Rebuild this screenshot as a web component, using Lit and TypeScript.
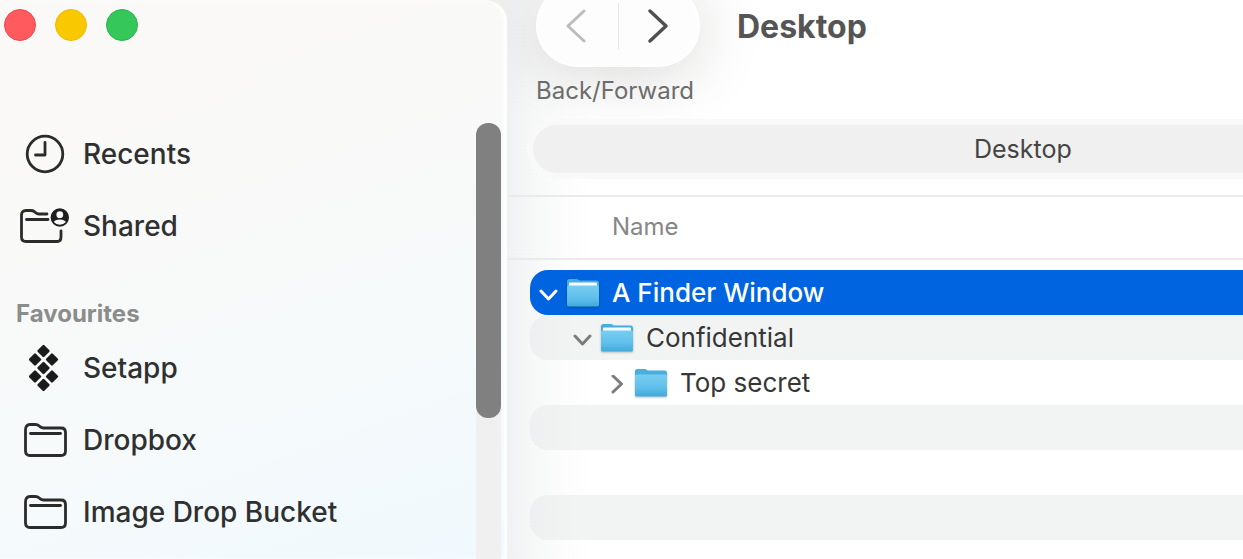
import { LitElement, html, svg, css } from "lit";
import { customElement, state } from "lit/decorators.js";

const folderOutline = svg`
  <path d="M1.5 7 Q1.5 1.5 6 1.5 H11.5 Q13.5 1.5 15 2.8 L16.3 3.9 Q17.6 5 19.5 5 H37 Q41.5 5 41.5 9.500 V28 Q41.500 32.500 37 32.500 H6 Q1.500 32.500 1.500 28 Z"/>
  <path d="M6.500 10.500 H36.500"/>`;

const icons: Record<string, unknown> = {
  clock: html`<svg width="40" height="40" viewBox="0 0 40 40" aria-hidden="true" fill="none" stroke="#2b2b2b" stroke-width="2.800" stroke-linecap="round" stroke-linejoin="round">
    <circle cx="20" cy="20" r="17.800"/><path d="M20 8.500 V21 H10.500"/></svg>`,
  shared: html`<svg width="50" height="36" viewBox="0 0 50 36" aria-hidden="true" fill="none" stroke="#2b2b2b" stroke-width="2.800" stroke-linecap="round" stroke-linejoin="round">
    <path d="M27 6 H19 Q17 6 15.700 4.800 L14.300 3.600 Q13 2.500 11 2.500 H6 Q1.500 2.500 1.500 7 V29 Q1.500 33.500 6 33.500 H37 Q41 33.500 41 29 V23"/>
    <path d="M6.500 11.500 H28"/>
    <circle cx="39.800" cy="9.500" r="9.200" fill="#1f1f1f" stroke="none"/>
    <circle cx="39.800" cy="6.700" r="3.400" fill="#f9f9f8" stroke="none"/>
    <path d="M33.800 14 Q35 11.500 39.800 11.500 Q44.600 11.500 45.800 14 Q43.500 16.700 39.800 16.700 Q36.100 16.700 33.800 14 Z" fill="#f9f9f8" stroke="none"/></svg>`,
  setapp: html`<svg width="32" height="48" viewBox="0 0 32 48" aria-hidden="true" fill="#1b1b1b" stroke="#1b1b1b" stroke-width="2.400" stroke-linejoin="round">
    ${[[14.5, 7], [6, 15.5], [23, 15.5], [14.5, 24], [6, 32.5], [23, 32.5], [14.5, 41]].map(
      ([x, y]) => svg`<path d=${`M${x} ${y - 5} l5 5 l-5 5 l-5 -5 Z`}/>`)}</svg>`,
  folder: html`<svg width="43" height="34" viewBox="0 0 43 34" aria-hidden="true" fill="none" stroke="#2b2b2b" stroke-width="2.800" stroke-linecap="round" stroke-linejoin="round">${folderOutline}</svg>`,
};

const blueFolder = (open: boolean) => html`<svg class="folder" width="34" height="30" viewBox="0 0 34 30" aria-hidden="true">
  <defs><linearGradient id="front" x1="0" y1="0" x2="0" y2="1"><stop offset="0" stop-color="#78cdf1"/><stop offset=".6" stop-color="#5fbfeb"/><stop offset="1" stop-color="#41a9da"/></linearGradient></defs>
  <path d="M1 3.500 Q1 1 3.500 1 H10.500 Q12 1 13 2 L13.800 2.600 H30.500 Q33 2.600 33 5 V14 H1 Z" fill="#49aedd"/>
  ${open ? svg`<rect x="3" y="4.500" width="28" height="5" rx="1" fill="#f6fbfe"/>` : null}
  <path d=${open ? "M1 9 Q1 7.500 2.500 7.500 H31.500 Q33 7.500 33 9 V27 Q33 28.500 31.500 28.500 H2.500 Q1 28.500 1 27 Z" : "M1 8 Q1 6.500 2.500 6.500 H31.500 Q33 6.500 33 8 V27 Q33 28.500 31.500 28.500 H2.500 Q1 28.500 1 27 Z"} fill="url(#front)"/>
</svg>`;

@customElement("finder-sidebar")
class FinderSidebar extends LitElement {
  static styles = css`
    :host { display: grid; grid-template-columns: 1fr 25px 6px; box-sizing: border-box; overflow: hidden;
      background: linear-gradient(160deg, #faf9f8 0%, #f9f9f8 35%, #f6fafb 66%, #f0f9fe 100%);
      border-top-right-radius: 22px; box-shadow: inset -3px 0 3px #fff; }
    .body { min-width: 0; }
    .lights { display: flex; gap: 19px; padding: 9px 0 0 4px; height: 109px; }
    .light { width: 32px; height: 32px; padding: 0; border-radius: 50%; border: 1px solid; }
    .close { background: #ff5a5e; border-color: #f0484c; }
    .minimise { background: #fac800; border-color: #eebc00; }
    .zoom { background: #35c759; border-color: #28b84b; }
    ul { list-style: none; margin: 0; padding: 0; }
    a { display: flex; align-items: center; height: 72px; color: #2f3030; text-decoration: none; font-size: 28px; font-weight: 500; white-space: nowrap; }
    .icon { display: flex; justify-content: center; flex: none; width: 50px; margin: 0 13px 0 20px; }
    .start { justify-content: flex-start; }
    h2 { margin: 0; padding: 35px 0 1px 16px; font-size: 24px; line-height: 34px; font-weight: 700; color: #8b8c8c; }
    .track { margin-top: 123px; background: #f0f0f0; border-radius: 12px 12px 0 0; }
    .thumb { height: 295px; border-radius: 12px; background: #808080; }
  `;
  private group(items: string[][]) {
    return html`<ul>${items.map(([icon, label]) => html`<li><a href="#"><span class="icon ${icon === "shared" ? "start" : ""}">${icons[icon]}</span>${label}</a></li>`)}</ul>`;
  }
  render() {
    return html`
      <div class="body">
        <div class="lights">
          <button class="light close" aria-label="Close"></button>
          <button class="light minimise" aria-label="Minimise"></button>
          <button class="light zoom" aria-label="Zoom"></button>
        </div>
        <nav>
          ${this.group([["clock", "Recents"], ["shared", "Shared"]])}
          <h2>Favourites</h2>
          ${this.group([["setapp", "Setapp"], ["folder", "Dropbox"], ["folder", "Image Drop Bucket"]])}
        </nav>
      </div>
      <div class="track"><div class="thumb"></div></div>`;
  }
}

@customElement("finder-toolbar")
class FinderToolbar extends LitElement {
  static styles = css`
    :host { display: block; padding-left: 29px; }
    .bar { display: flex; align-items: center; gap: 37px; height: 83px; margin-top: -16px; }
    .pill { display: flex; align-items: center; justify-content: center; width: 164px; height: 83px; border-radius: 42px;
      background: #fdfdfd; box-shadow: 0 8px 64px rgba(30, 24, 16, .17), inset 0 0 3px 2px #fff; }
    .pill button { flex: 1; height: 100%; display: flex; align-items: center; justify-content: center; padding: 0; border: 0; background: none; }
    .back { color: #bcbcbc; }
    .forward { color: #505050; }
    .rule { width: 1px; height: 46px; background: #e6e6e6; }
    h1 { margin: 0; padding-top: 2px; font-size: 32px; line-height: 40px; font-weight: 700; color: #555; }
    .label { position: relative; margin: 0; padding: 8px 0 12px; font-size: 24px; line-height: 32px; color: #6c6c6c; }
    .path { position: relative; display: flex; align-items: center; height: 48px; margin-left: -9px; padding-left: 441px; border: 6px solid #f9f9f9; border-right: 0;
      border-radius: 30px 0 0 30px; background: #f0f0f0; font-size: 25px; line-height: 30px; color: #444; }
  `;
  render() {
    return html`
      <div class="bar">
        <div class="pill">
          <button class="back" aria-label="Back"><svg width="22" height="34" viewBox="0 0 22 34" fill="none" stroke="currentColor" stroke-width="3" stroke-linecap="round" stroke-linejoin="round"><path d="M18 2 L2 17 L18 32"/></svg></button>
          <span class="rule"></span>
          <button class="forward" aria-label="Forward"><svg width="22" height="34" viewBox="0 0 22 34" fill="none" stroke="currentColor" stroke-width="3.400" stroke-linecap="round" stroke-linejoin="round"><path d="M2 2 L18 17 L2 32"/></svg></button>
        </div>
        <h1>Desktop</h1>
      </div>
      <p class="label">Back/Forward</p>
      <div class="path">Desktop</div>`;
  }
}

interface Row { name: string; depth: number; open: boolean; selected?: boolean }

@customElement("finder-list")
class FinderList extends LitElement {
  @state() private rows: (Row | null)[] = [
    { name: "A Finder Window", depth: 0, open: true, selected: true },
    { name: "Confidential", depth: 1, open: true },
    { name: "Top secret", depth: 2, open: false },
    null, null, null,
  ];
  static styles = css`
    :host { display: block; margin-top: 16px; }
    table { width: 100%; border-collapse: separate; border-spacing: 0; }
    th { box-sizing: border-box; height: 65px; padding: 0 0 2px 105px; border: solid #e8eaeb; border-width: 2px 0; text-align: left; font-size: 24px; font-weight: 400; color: #868686; }
    tbody::before { content: ""; display: block; height: 10px; }
    td { padding: 0 0 0 23px; }
    .row { display: flex; align-items: center; box-sizing: border-box; height: 45px; padding-left: 8px; border-radius: 18px 0 0 18px; color: #363636; font-size: 26px; white-space: nowrap; }
    .d1 { padding-left: 42px; }
    .d2 { padding-left: 76px; }
    tr:nth-child(even) .row { background: rgba(231, 234, 233, .52); }
    .row.selected { background: #0064e1; color: #fff; font-weight: 500; }
    .twist { display: flex; justify-content: center; width: 22px; padding: 5px 0 0; border: 0; background: none; color: #7c7c7c; }
    .selected .twist { color: #fff; }
    .folder { margin: 1px 12px 0 6px; filter: drop-shadow(0 1px 1px rgba(0, 0, 0, .25)); }
  `;
  render() {
    return html`<table>
      <thead><tr><th scope="col">Name</th></tr></thead>
      <tbody>${this.rows.map((r) => html`<tr><td>${r
        ? html`<div class="row d${r.depth} ${r.selected ? "selected" : ""}">
            <button class="twist" aria-label="Toggle ${r.name}" aria-expanded=${r.open}><svg width="20" height="20" viewBox="0 0 20 20" fill="none" stroke="currentColor" stroke-width="3" stroke-linecap="round" stroke-linejoin="round"><path d=${r.open ? "M2 6 L9.500 14 L17 6" : "M6 1 L14.500 9 L6 17"}/></svg></button>
            ${blueFolder(r.open)}<span>${r.name}</span></div>`
        : html`<div class="row"></div>`}</td></tr>`)}</tbody>
    </table>`;
  }
}

@customElement("app-root")
class AppRoot extends LitElement {
  static styles = css`
    :host { display: grid; grid-template-columns: minmax(360px, 507px) minmax(0, 1fr); height: 100vh; overflow: hidden;
      background: #eeeeed; font-family: Inter, "Liberation Sans", sans-serif; }
    main { min-width: 0; overflow: hidden; background: linear-gradient(90deg, #f0f1f2 0, #f7f8f8 28px, #fdfdfd 60px, #fff 84px); }
  `;
  render() {
    return html`<finder-sidebar></finder-sidebar><main><finder-toolbar></finder-toolbar><finder-list></finder-list></main>`;
  }
}
